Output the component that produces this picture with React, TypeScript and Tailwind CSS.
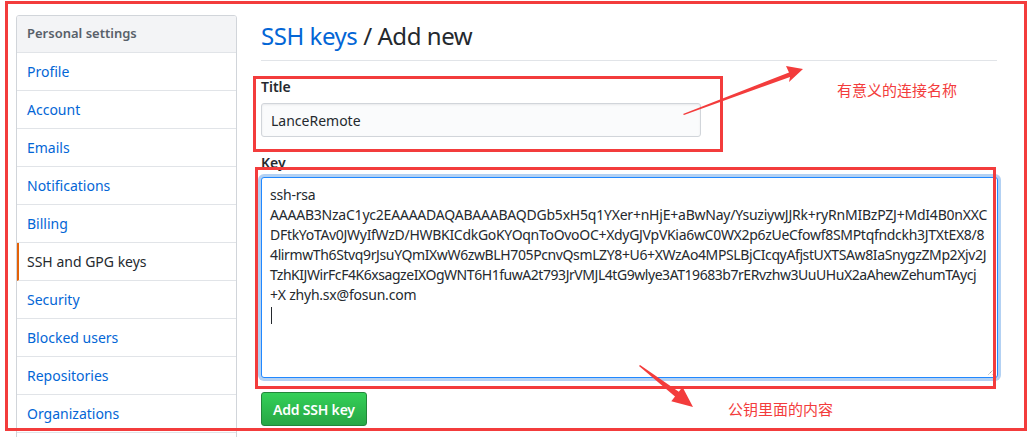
import React from "react";

const RED = "#f33c3c";

const items = [
  "Profile",
  "Account",
  "Emails",
  "Notifications",
  "Billing",
  "SSH and GPG keys",
  "Security",
  "Blocked users",
  "Repositories",
  "Organizations",
  "",
];

const keyLines: { text: string; cls: string }[] = [
  { text: "ssh-rsa", cls: "tracking-[-0.22px]" },
  {
    text: "AAAAB3NzaC1yc2EAAAADAQABAAABAQDGb5xH5q1YXer+nHjE+aBwNay/YsuziywJJRk+ryRnMIBzPZJ+MdI4B0nXXC",
    cls: "tracking-[-0.22px]",
  },
  {
    text: "DFtkYoTAv0JWyIfWzD/HWBKICdkGoKYOqnToOvoOC+XdyGJVpVKia6wC0WX2p6zUeCfowf8SMPtqfndckh3JTXtEX8/8",
    cls: "tracking-[-0.3px]",
  },
  {
    text: "4lirmwTh6Stvq9rJsuYQmIXwW6zwBLH705PcnvQsmLZY8+U6+XWzAo4MPSLBjCIcqyAfjstUXTSAw8IaSnygzZMp2Xjv2J",
    cls: "tracking-[-0.38px]",
  },
  {
    text: "TzhKIJWirFcF4K6xsagzeIXOgWNT6H1fuwA2t793JrVMJL4tG9wlye3AT19683b7rERvzhw3UuUHuX2aAhewZehumTAycj",
    cls: "tracking-[-0.45px]",
  },
  { text: "+X zhyh.sx@fosun.com", cls: "tracking-[-0.22px]" },
];

export default function App() {
  return (
    <div
      className="relative w-[1034px] h-[437px] overflow-hidden bg-white text-[#24292e]"
      style={{ fontFamily: '"Noto Sans", "Open Sans", sans-serif' }}
    >
      <div className="flex pl-[16px] pt-[15px]">
        {/* Sidebar */}
        <nav className="w-[221px] shrink-0 border border-[#d1d5da] rounded-[3px] overflow-hidden">
          <div className="h-[37px] flex items-center px-[10px] bg-[#f3f4f6] border-b border-[#e1e4e8] text-[13px] font-semibold text-[#586069]">
            Personal settings
          </div>
          {items.map((it, i) => {
            const sel = it === "SSH and GPG keys";
            return (
              <div
                key={i}
                className={
                  "h-[38px] flex items-center px-[10px] border-b border-[#e1e4e8] text-[14px] " +
                  (sel
                    ? "border-l-2 border-l-[#e36209] pl-[8px] text-[#24292e]"
                    : "text-[#0366d6]")
                }
              >
                {it}
              </div>
            );
          })}
        </nav>

        {/* Main */}
        <main className="ml-[24px] w-[736px] flex flex-col items-start">
          <div className="self-stretch border-b border-[#e1e4e8] pb-[6px] pt-[3px]">
            <h1 className="text-[24px] leading-[36px] font-normal tracking-[-0.45px]">
              <span className="text-[#0366d6]">SSH keys</span> / Add new
            </h1>
          </div>

          <div className="mt-[16px] flex flex-col gap-[6px]">
            <div className="text-[14px] font-semibold leading-[20px]">Title</div>
            <div className="w-[440px] h-[34px] flex items-center px-[9px] bg-[#fafbfc] border border-[#d1d5da] rounded-[3px] text-[14px] shadow-[inset_0_1px_2px_rgba(27,31,35,0.075)]">
              LanceRemote
            </div>
          </div>

          <div className="mt-[16px] flex flex-col gap-[4px]">
            <div className="text-[14px] font-semibold leading-[20px]">Key</div>
            <div className="relative h-[201px] w-[737px] border border-[#2188ff] rounded-[3px] bg-white shadow-[0_0_0_3px_rgba(3,102,214,0.3)] px-[8px] pt-[7px] text-[14px] leading-[20px]">
              {keyLines.map((l, i) => (
                <div key={i} className={"whitespace-pre " + l.cls}>
                  {l.text}
                </div>
              ))}
              <div className="mt-[2px] ml-[1px] w-px h-[17px] bg-[#24292e]" />
              <svg
                className="absolute right-[1px] bottom-[1px]"
                width="10"
                height="10"
                viewBox="0 0 10 10"
              >
                <path d="M9 2 L2 9 M9 6 L6 9" stroke="#777" strokeWidth="1" strokeDasharray="1 1" />
              </svg>
            </div>
          </div>

          <button className="mt-[14px] h-[34px] px-[11px] rounded-[3px] border border-[#22863a] bg-gradient-to-b from-[#34d058] to-[#28a745] text-white text-[14px] font-semibold tracking-[-0.2px]">
            Add SSH key
          </button>
        </main>
      </div>

      {/* Annotations */}
      <div
        className="absolute left-[5px] top-[1px] w-[1022px] h-[430px] border-[3px] pointer-events-none"
        style={{ borderColor: RED }}
      />
      <div
        className="absolute left-[253px] top-[76px] w-[470px] h-[76px] border-[3px] pointer-events-none"
        style={{ borderColor: RED }}
      />
      <div
        className="absolute left-[255px] top-[167px] w-[741px] h-[222px] border-[3px] pointer-events-none"
        style={{ borderColor: RED }}
      />
      <svg className="absolute left-0 top-0 pointer-events-none" width="1034" height="437">
        <polygon
          points="683,114 789,72.5 786,66 803,69 789,82 790,77 684,115"
          fill={RED}
        />
        <polygon
          points="640,365 678.8,391.8 682.5,387.1 693,407 671.3,401.3 675,396.6 639,366"
          fill={RED}
        />
      </svg>
      <div
        className="absolute left-[837px] top-[81px] text-[15px] leading-[18px]"
        style={{ color: RED, fontFamily: '"Noto Sans CJK SC", sans-serif' }}
      >
        有意义的连接名称
      </div>
      <div
        className="absolute left-[728px] top-[400px] text-[15px] leading-[18px]"
        style={{ color: RED, fontFamily: '"Noto Sans CJK SC", sans-serif' }}
      >
        公钥里面的内容
      </div>
    </div>
  );
}
